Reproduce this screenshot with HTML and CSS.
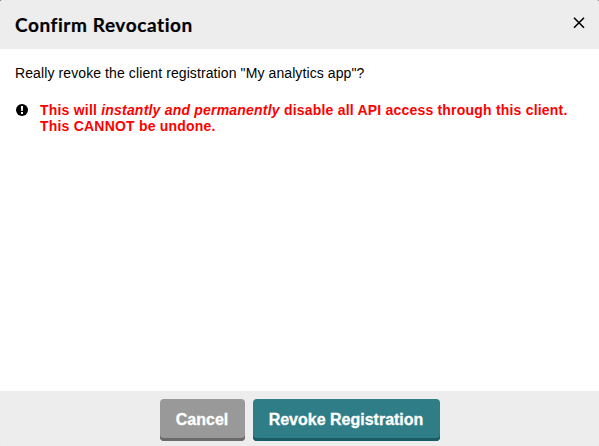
FILE: index.html
```html
<!DOCTYPE html>
<html lang="en">
<head>
<meta charset="utf-8">
<title>Confirm Revocation</title>
<link rel="stylesheet" href="styles.css">
</head>
<body>
<section class="dialog" role="dialog" aria-labelledby="title">
  <header class="dialog-header">
    <h1 id="title">Confirm Revocation</h1>
    <button class="close" aria-label="Close"><svg viewBox="0 0 12 12" width="12" height="12"><path d="M1 .7 11 10.700M11 .7 1 10.700"/></svg></button>
  </header>
  <main class="dialog-body">
    <p class="question">Really revoke the client registration "My analytics app"?</p>
    <div class="warning">
      <svg class="warning-icon" viewBox="0 0 12 12" width="12" height="12"><circle cx="6" cy="6" r="6"/><path d="M4.900 2h2.200l-.3 5H5.200zM5 8h2v1.900H5z"/></svg>
      <p><span class="line">This will <em>instantly and permanently</em> disable all API access through this client.</span><span class="line">This CANNOT be undone.</span></p>
    </div>
  </main>
  <footer class="dialog-footer">
    <button class="button cancel">Cancel</button>
    <button class="button revoke">Revoke Registration</button>
  </footer>
</section>
</body>
</html>
```
FILE: styles.css
```css
* { box-sizing: border-box; }
body { margin: 0; background: #777; font-family: "Liberation Sans", Arial, sans-serif; }
.dialog { display: flex; flex-direction: column; height: 446px; overflow: hidden; background: #fff; border-radius: 3px 3px 1px 1px; }
.dialog-header { display: flex; justify-content: space-between; height: 49px; padding: 14px 14px 0 15px; background: #ededed; }
h1 { margin: 0; font: 700 19px/21px Lato, sans-serif; letter-spacing: .58px; color: #000; white-space: nowrap; -webkit-text-stroke: .2px #000; }
.close { display: block; width: 12px; height: 12px; margin-top: 3px; padding: 0; border: 0; background: none; }
.close svg { display: block; fill: none; stroke: #000; stroke-width: 1.6; }
.dialog-body { flex: 1; padding: 16px 15px; }
p { margin: 0; }
.question { font-size: 14px; line-height: 16px; letter-spacing: .1px; color: #000; white-space: nowrap; }
.warning { display: flex; gap: 12px; margin-top: 21px; padding-left: 1px; color: #f00; font-size: 14px; font-weight: 700; line-height: 16px; letter-spacing: .205px; }
.warning-icon { flex: none; margin-top: 2px; fill: #000; }
.warning-icon path { fill: #fff; }
.line { display: block; white-space: nowrap; }
.dialog-footer { display: flex; justify-content: center; gap: 8px; height: 55px; padding-top: 8px; background: #ededed; }
.button { display: block; height: 42px; padding: 0; border: 0; border-radius: 4px; color: #fff; font: 700 16px/36px "Liberation Sans", Arial, sans-serif; white-space: nowrap; -webkit-text-stroke: .3px #fff; }
.cancel { width: 85px; background: #999; box-shadow: inset 0 -3px #6b6b6b; }
.revoke { width: 187px; background: #2f7d87; box-shadow: inset 0 -3px #1b5b64; }
```
